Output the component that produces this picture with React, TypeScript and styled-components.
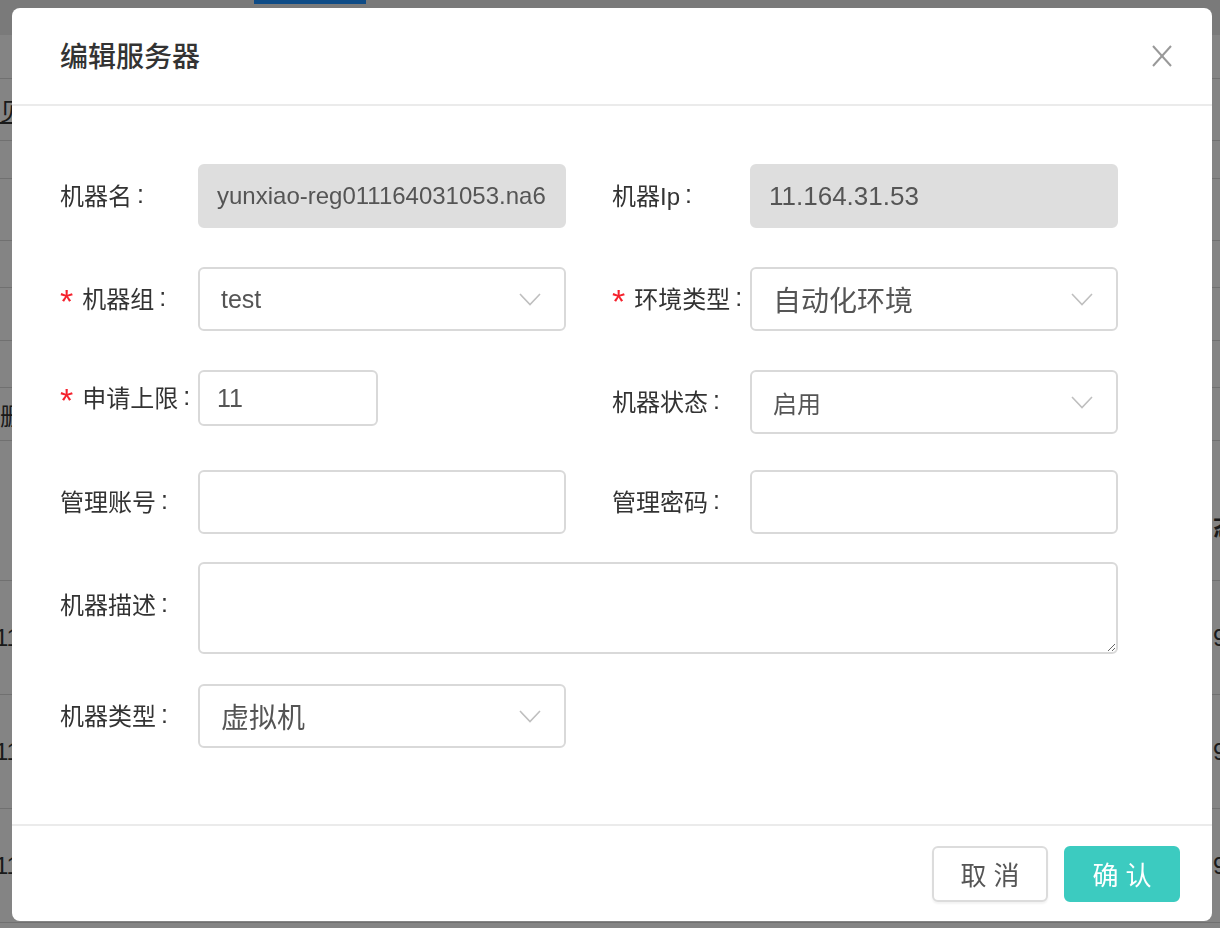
import styled, { createGlobalStyle } from "styled-components";

const FONT = `"Liberation Sans", "Noto Sans CJK SC", sans-serif`;

const GlobalStyle = createGlobalStyle`
  html, body {
    margin: 0;
    padding: 0;
  }
  body {
    width: 1220px;
    height: 928px;
    overflow: hidden;
    font-family: ${FONT};
    background: #fbfbfb;
  }
  * {
    box-sizing: border-box;
  }
`;

/* ---------- page behind the dialog ---------- */

const Page = styled.div`
  width: 1220px;
  height: 928px;
  overflow: hidden;
  background: #fbfbfb;
`;

const TopBar = styled.div`
  height: 35px;
  background: #e8e8e8;
  display: flex;
  padding-left: 254px;
`;

const ActiveTab = styled.div`
  width: 112px;
  height: 100%;
  border-top: 4px solid #1b90ff;
`;

const TableRow = styled.div<{ $h: number; $line?: boolean }>`
  height: ${(p) => p.$h}px;
  border-bottom: ${(p) => (p.$line === false ? "none" : "1px solid #d6d6d6")};
  display: flex;
  align-items: center;
  justify-content: space-between;
  font-size: 24px;
  color: #333;
  white-space: nowrap;
`;

const LeftCell = styled.div<{ $indent?: number; $link?: boolean }>`
  text-indent: ${(p) => p.$indent ?? 0}px;
  text-decoration: ${(p) => (p.$link ? "underline" : "none")};
`;

const RightCell = styled.div<{ $bold?: boolean }>`
  width: 7px;
  overflow: visible;
  font-weight: ${(p) => (p.$bold ? 700 : 400)};
`;

const rows = [
  { h: 44 },
  { h: 62, left: "见看", link: true },
  { h: 38 },
  { h: 62 },
  { h: 47 },
  { h: 53 },
  { h: 47 },
  { h: 53, left: "删除" },
  { h: 30, line: false },
  { h: 110, right: "态", bold: true },
  { h: 114, left: "11.164.31.5", indent: -5, right: "9" },
  { h: 114, left: "11.164.31.6", indent: -5, right: "9" },
  { h: 114, left: "11.164.31.7", indent: -5, right: "9" },
];

/* ---------- dialog ---------- */

const Mask = styled.div`
  position: fixed;
  inset: 0;
  background: rgba(0, 0, 0, 0.475);
`;

const ModalWrap = styled.div`
  position: fixed;
  inset: 0;
  display: flex;
  justify-content: center;
  align-items: flex-start;
  padding: 8px 0 0 4px;
`;

const Modal = styled.div`
  width: 1200px;
  background: #fff;
  border-radius: 8px;
  display: flex;
  flex-direction: column;
  font-family: ${FONT};
`;

const Header = styled.div`
  height: 98px;
  border-bottom: 2px solid #ebebeb;
  display: flex;
  align-items: center;
  justify-content: space-between;
  padding: 0 40px 0 48px;
`;

const Title = styled.div`
  font-size: 28px;
  font-weight: 500;
  color: #333;
  padding-bottom: 2px;
`;

const CloseButton = styled.div`
  width: 20px;
  height: 22px;
  display: flex;
  cursor: pointer;
`;

const Body = styled.div`
  padding: 58px 0 76px 48px;
`;

const Row = styled.div<{ $mt?: number }>`
  width: 1058px;
  display: grid;
  grid-template-columns: 506px 506px;
  column-gap: 46px;
  align-items: start;
  margin-top: ${(p) => p.$mt ?? 0}px;
`;

const FormItem = styled.div<{ $full?: boolean; $top?: boolean }>`
  display: flex;
  align-items: ${(p) => (p.$top ? "flex-start" : "center")};
  grid-column: ${(p) => (p.$full ? "1 / -1" : "auto")};
`;

const Label = styled.label<{ $offset?: number }>`
  width: 138px;
  flex-shrink: 0;
  display: flex;
  align-items: center;
  font-size: 24px;
  color: #333;
  white-space: nowrap;
  padding-bottom: 4px;
  margin-top: ${(p) => p.$offset ?? 0}px;
`;

const Required = styled.span`
  color: #f5222d;
  font-family: "Liberation Sans", sans-serif;
  font-size: 34px;
  line-height: 1;
  margin-right: 9px;
  margin-top: 7px;
`;

const Colon = styled.span`
  font-family: "Liberation Sans", sans-serif;
  font-size: 25px;
  margin-left: 5px;
`;

const TextInput = styled.input<{ $w?: number; $h?: number; $size?: number }>`
  width: ${(p) => (p.$w ? `${p.$w}px` : "100%")};
  height: ${(p) => p.$h ?? 64}px;
  border: 2px solid #d9d9d9;
  border-radius: 6px;
  padding: 0 17px;
  font-family: ${FONT};
  font-size: ${(p) => p.$size ?? 24}px;
  color: #555;
  background: #fff;
  outline: none;

  &:disabled {
    background: #dedede;
    border-color: #dedede;
    color: #555;
    -webkit-text-fill-color: #555;
    opacity: 1;
  }
`;

const TextArea = styled.textarea`
  width: 100%;
  height: 92px;
  border: 2px solid #d9d9d9;
  border-radius: 6px;
  padding: 10px 17px;
  font-family: ${FONT};
  font-size: 24px;
  color: #555;
  outline: none;
  display: block;
`;

const Select = styled.div<{ $size?: number }>`
  flex: 1;
  height: 64px;
  border: 2px solid #d9d9d9;
  border-radius: 6px;
  padding: 0 23px 0 21px;
  display: flex;
  align-items: center;
  justify-content: space-between;
  font-size: ${(p) => p.$size ?? 24}px;
  color: #555;
  cursor: pointer;
`;

const Footer = styled.div`
  border-top: 2px solid #ebebeb;
  padding: 20px 32px 19px;
  display: flex;
  justify-content: flex-end;
  gap: 16px;
`;

const Button = styled.button<{ $primary?: boolean }>`
  width: 116px;
  height: 56px;
  border-radius: 6px;
  border: 2px solid ${(p) => (p.$primary ? "#3ccbc0" : "#dcdcdc")};
  background: ${(p) => (p.$primary ? "#3ccbc0" : "#fff")};
  color: ${(p) => (p.$primary ? "#fff" : "#555")};
  font-family: ${FONT};
  font-size: 26px;
  box-shadow: ${(p) => (p.$primary ? "none" : "0 2px 2px rgba(0, 0, 0, 0.05)")};
  cursor: pointer;
  padding: 0 0 2px;
`;

const Chevron = () => (
  <svg width="22" height="13" viewBox="0 0 22 13" fill="none">
    <polyline points="1,1 11,11.5 21,1" stroke="#bfbfbf" strokeWidth="1.6" />
  </svg>
);

const CloseIcon = () => (
  <svg width="20" height="22" viewBox="0 0 20 22" fill="none">
    <line x1="1" y1="1" x2="19" y2="21" stroke="#999" strokeWidth="2" />
    <line x1="19" y1="1" x2="1" y2="21" stroke="#999" strokeWidth="2" />
  </svg>
);

const FieldLabel = ({
  text,
  required,
  offset,
}: {
  text: string;
  required?: boolean;
  offset?: number;
}) => (
  <Label $offset={offset}>
    {required && <Required>*</Required>}
    {text}
    <Colon>:</Colon>
  </Label>
);

const App = () => {
  return (
    <>
      <GlobalStyle />
      <Page>
        <TopBar>
          <ActiveTab />
        </TopBar>
        {rows.map((r, i) => (
          <TableRow key={i} $h={r.h} $line={r.line}>
            <LeftCell $indent={r.indent} $link={r.link}>
              {r.left}
            </LeftCell>
            <RightCell $bold={r.bold}>{r.right}</RightCell>
          </TableRow>
        ))}
      </Page>
      <Mask />
      <ModalWrap>
        <Modal>
          <Header>
            <Title>编辑服务器</Title>
            <CloseButton>
              <CloseIcon />
            </CloseButton>
          </Header>
          <Body>
            <Row>
              <FormItem>
                <FieldLabel text="机器名" />
                <TextInput disabled defaultValue="yunxiao-reg011164031053.na61" />
              </FormItem>
              <FormItem>
                <FieldLabel text="机器Ip" />
                <TextInput disabled defaultValue="11.164.31.53" $size={26} />
              </FormItem>
            </Row>
            <Row $mt={39}>
              <FormItem>
                <FieldLabel text="机器组" required />
                <Select $size={25}>
                  <span>test</span>
                  <Chevron />
                </Select>
              </FormItem>
              <FormItem>
                <FieldLabel text="环境类型" required />
                <Select $size={28}>
                  <span>自动化环境</span>
                  <Chevron />
                </Select>
              </FormItem>
            </Row>
            <Row $mt={39}>
              <FormItem>
                <FieldLabel text="申请上限" required />
                <TextInput defaultValue="11" $w={180} $h={56} $size={25} />
              </FormItem>
              <FormItem>
                <FieldLabel text="机器状态" />
                <Select $size={24}>
                  <span>启用</span>
                  <Chevron />
                </Select>
              </FormItem>
            </Row>
            <Row $mt={36}>
              <FormItem>
                <FieldLabel text="管理账号" />
                <TextInput />
              </FormItem>
              <FormItem>
                <FieldLabel text="管理密码" />
                <TextInput type="password" />
              </FormItem>
            </Row>
            <Row $mt={28}>
              <FormItem $full $top>
                <FieldLabel text="机器描述" offset={24} />
                <TextArea />
              </FormItem>
            </Row>
            <Row $mt={30}>
              <FormItem>
                <FieldLabel text="机器类型" />
                <Select $size={28}>
                  <span>虚拟机</span>
                  <Chevron />
                </Select>
              </FormItem>
            </Row>
          </Body>
          <Footer>
            <Button>取 消</Button>
            <Button $primary>确 认</Button>
          </Footer>
        </Modal>
      </ModalWrap>
    </>
  );
};

export default App;
